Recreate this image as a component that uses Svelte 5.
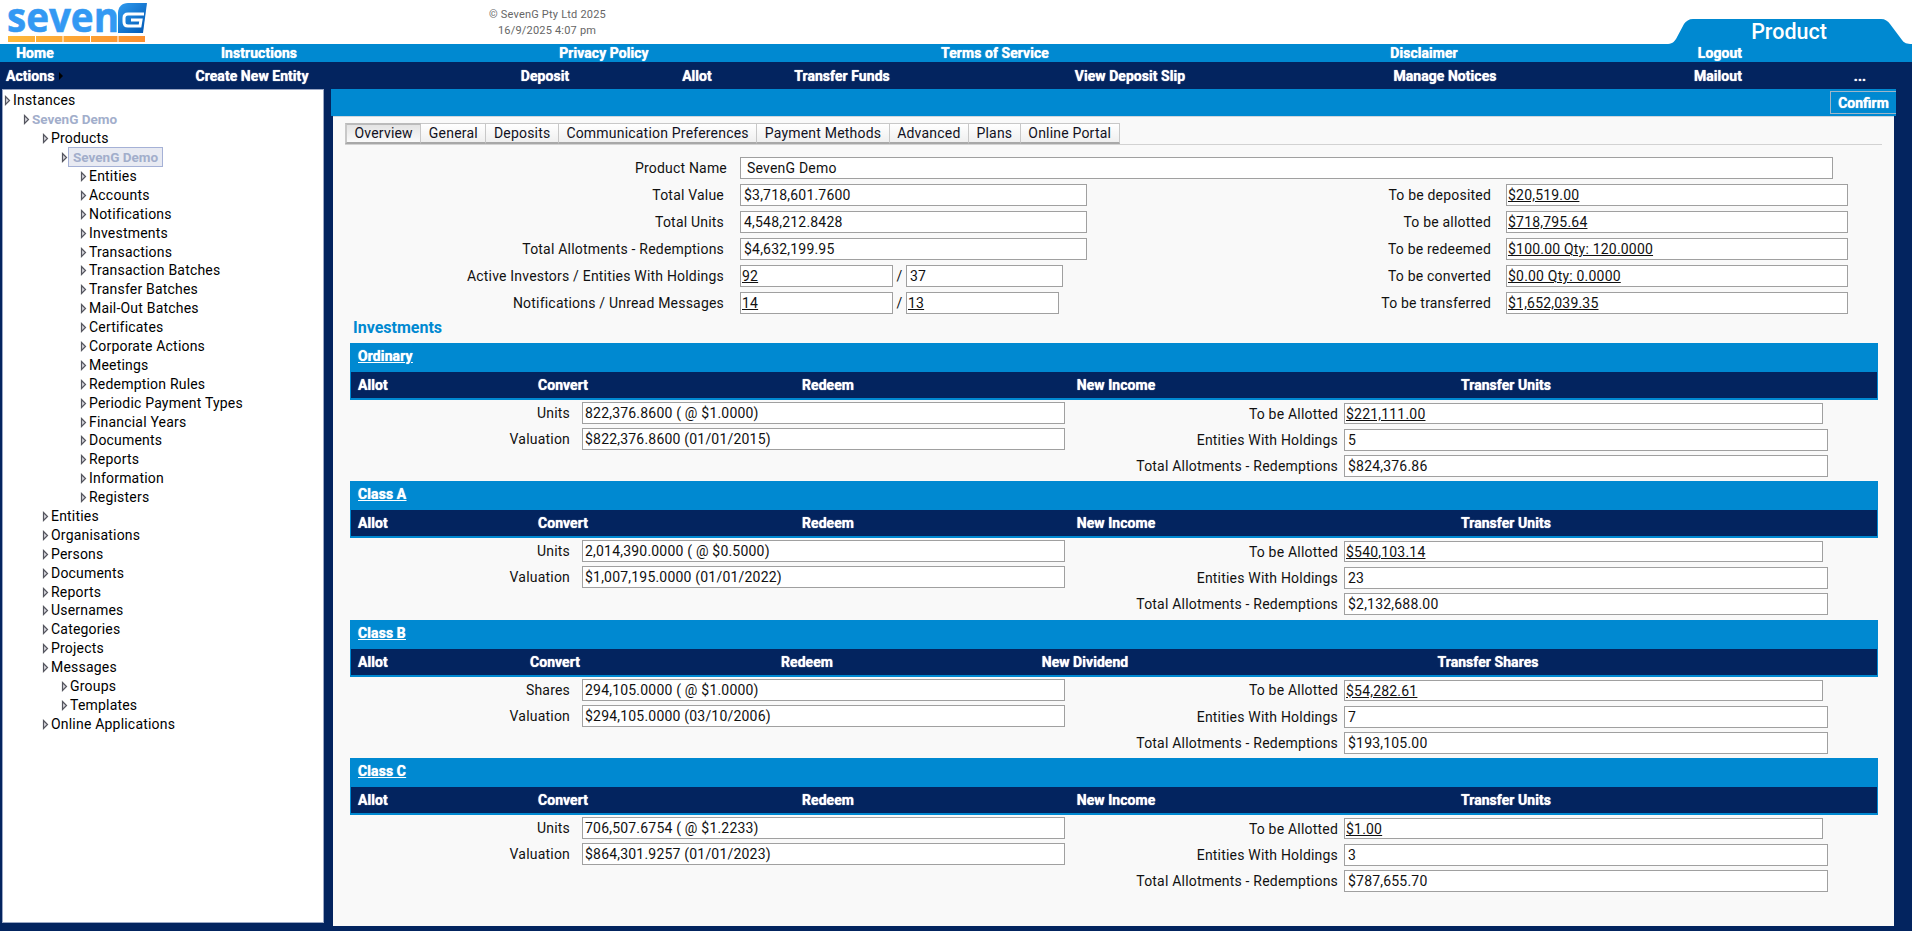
<script lang="ts">
	const topNav = ['Home', 'Instructions', 'Privacy Policy', 'Terms of Service', 'Disclaimer', 'Logout'];
	const actions = ['Create New Entity', 'Deposit', 'Allot', 'Transfer Funds', 'View Deposit Slip', 'Manage Notices', 'Mailout', '...'];
	const tabs = ['Overview', 'General', 'Deposits', 'Communication Preferences', 'Payment Methods', 'Advanced', 'Plans', 'Online Portal'];

	const tree = [
		{ label: 'Instances', depth: 0 },
		{ label: 'SevenG Demo', depth: 1, link: true },
		{ label: 'Products', depth: 2 },
		{ label: 'SevenG Demo', depth: 3, link: true, selected: true },
		...['Entities', 'Accounts', 'Notifications', 'Investments', 'Transactions', 'Transaction Batches', 'Transfer Batches', 'Mail-Out Batches', 'Certificates', 'Corporate Actions', 'Meetings', 'Redemption Rules', 'Periodic Payment Types', 'Financial Years', 'Documents', 'Reports', 'Information', 'Registers'].map((label) => ({ label, depth: 4 })),
		...['Entities', 'Organisations', 'Persons', 'Documents', 'Reports', 'Usernames', 'Categories', 'Projects', 'Messages'].map((label) => ({ label, depth: 2 })),
		{ label: 'Groups', depth: 3 },
		{ label: 'Templates', depth: 3 },
		{ label: 'Online Applications', depth: 2 }
	];

	const todo = [
		['To be deposited', '$20,519.00'],
		['To be allotted', '$718,795.64'],
		['To be redeemed', '$100.00 Qty: 120.0000'],
		['To be converted', '$0.00 Qty: 0.0000'],
		['To be transferred', '$1,652,039.35']
	];

	const sections = [
		{ name: 'Ordinary', shares: false, amount: '822,376.8600 ( @ $1.0000)', valuation: '$822,376.8600 (01/01/2015)', allot: '$221,111.00', holdings: '5', total: '$824,376.86' },
		{ name: 'Class A', shares: false, amount: '2,014,390.0000 ( @ $0.5000)', valuation: '$1,007,195.0000 (01/01/2022)', allot: '$540,103.14', holdings: '23', total: '$2,132,688.00' },
		{ name: 'Class B', shares: true, amount: '294,105.0000 ( @ $1.0000)', valuation: '$294,105.0000 (03/10/2006)', allot: '$54,282.61', holdings: '7', total: '$193,105.00' },
		{ name: 'Class C', shares: false, amount: '706,507.6754 ( @ $1.2233)', valuation: '$864,301.9257 (01/01/2023)', allot: '$1.00', holdings: '3', total: '$787,655.70' }
	];
</script>

<div class="page">
	<header class="header">
		<svg class="logo" viewBox="0 0 147 44" width="147" height="44" role="img" aria-label="SevenG">
			<defs>
				<linearGradient id="g-fill" x1="0" y1="0" x2="1" y2="1">
					<stop offset="0" stop-color="#2f9cf0" />
					<stop offset="1" stop-color="#0056b3" />
				</linearGradient>
				<linearGradient id="bar-fill" x1="0" y1="0" x2="1" y2="0">
					<stop offset="0" stop-color="#fdb93a" />
					<stop offset="1" stop-color="#fd8f2f" />
				</linearGradient>
			</defs>
			<text x="7" y="32" class="logo-text" textLength="112" lengthAdjust="spacingAndGlyphs">seven</text>
			<path d="M118 33V13c0-6 4-10 10-10h19l-4 30z" fill="url(#g-fill)" />
			<path d="M144 14H128q-4 0-4 4v4q0 4 4 4h12l1-6H131" fill="none" stroke="#fff" stroke-width="3" />
			<rect x="8" y="36" width="137" height="6" fill="url(#bar-fill)" />
			<path d="M35.500 36v6M63 36v6M90.500 36v6M118 36v6" stroke="#fff" stroke-width="1" />
		</svg>
		<div class="copyright">
			<div>© SevenG Pty Ltd 2025</div>
			<div>16/9/2025 4:07 pm</div>
		</div>
		<div class="product-tab">
			<svg class="tab-shape" viewBox="0 0 246 25" width="246" height="25" aria-hidden="true">
				<path d="M0 25c6 0 8-2 10-5L18 5c2-3 5-5 9-5H215c4 0 7 2 9 5L236 21c2 3 5 4 10 4z" fill="#0089d1" />
			</svg>
			<span>Product</span>
		</div>
	</header>

	<nav class="nav-top">
		{#each topNav as item}
			<span>{item}</span>
		{/each}
	</nav>
	<nav class="nav-actions">
		<span class="actions-label">Actions<i class="actions-arrow"></i></span>
		{#each actions as item}
			<span>{item}</span>
		{/each}
	</nav>

	<div class="body">
		<aside class="tree">
			{#each tree as node}
				<div class="node" class:d1={node.depth === 1} class:d2={node.depth === 2} class:d3={node.depth === 3} class:d4={node.depth === 4}>
					<svg class="arrow" viewBox="0 0 7 11" width="7" height="11" aria-hidden="true">
						<path d="M1.500 1.500l4 4l-4 4z" fill="#d8d8de" stroke="#55565f" stroke-width="1.200" />
					</svg>
					<span class:link={node.link} class:selected={node.selected}>{node.label}</span>
				</div>
			{/each}
		</aside>

		<main class="main">
			<div class="toolbar"><button class="confirm">Confirm</button></div>
			<div class="content">
				<div class="tabs">
					{#each tabs as tab, i}
						<span class="tab" class:active={i === 0}>{tab}</span>
					{/each}
				</div>

				<div class="summary">
					<div class="row name-row">
						<label for="product-name">Product Name</label>
						<div id="product-name" class="field wide">SevenG Demo</div>
					</div>
					<div class="summary-cols">
						<div class="col-left">
							<div class="row"><span class="lbl">Total Value</span><div class="field">$3,718,601.7600</div></div>
							<div class="row"><span class="lbl">Total Units</span><div class="field">4,548,212.8428</div></div>
							<div class="row"><span class="lbl">Total Allotments - Redemptions</span><div class="field">$4,632,199.95</div></div>
							<div class="row">
								<span class="lbl">Active Investors / Entities With Holdings</span>
								<div class="field half u"><u>92</u></div><span class="slash">/</span><div class="field half-b">37</div>
							</div>
							<div class="row">
								<span class="lbl">Notifications / Unread Messages</span>
								<div class="field half u"><u>14</u></div><span class="slash">/</span><div class="field half-c u"><u>13</u></div>
							</div>
						</div>
						<div class="col-right">
							{#each todo as [label, value]}
								<div class="row"><span class="lbl">{label}</span><div class="field u"><u>{value}</u></div></div>
							{/each}
						</div>
					</div>
				</div>

				<h2 class="heading">Investments</h2>

				{#each sections as s}
					<section class="section">
						<div class="bar"><a href="#top">{s.name}</a></div>
						<div class="ops" class:shares={s.shares}>
							<span class="allot">Allot</span>
							<span>Convert</span>
							<span>Redeem</span>
							<span>{s.shares ? 'New Dividend' : 'New Income'}</span>
							<span>{s.shares ? 'Transfer Shares' : 'Transfer Units'}</span>
						</div>
						<div class="section-body">
							<div class="sec-left">
								<div class="row"><span class="lbl">{s.shares ? 'Shares' : 'Units'}</span><div class="field">{s.amount}</div></div>
								<div class="row"><span class="lbl">Valuation</span><div class="field">{s.valuation}</div></div>
							</div>
							<div class="sec-right">
								<div class="row first"><span class="lbl">To be Allotted</span><div class="field short u"><u>{s.allot}</u></div></div>
								<div class="row"><span class="lbl">Entities With Holdings</span><div class="field">{s.holdings}</div></div>
								<div class="row"><span class="lbl">Total Allotments - Redemptions</span><div class="field">{s.total}</div></div>
							</div>
						</div>
					</section>
				{/each}
			</div>
		</main>
	</div>
</div>

<style>
	:global(body) {
		margin: 0;
		background: #03245f;
	}
	.page {
		width: 1912px;
		height: 931px;
		overflow: hidden;
		display: flex;
		flex-direction: column;
		font-family: Roboto, 'Liberation Sans', sans-serif;
		font-size: 14px;
		letter-spacing: 0.2px;
		color: #111;
		background: #03245f;
	}

	/* header */
	.header {
		height: 44px;
		flex: none;
		display: flex;
		background: #fff;
	}
	.logo {
		flex: none;
		overflow: visible;
	}
	.logo-text {
		font-family: 'Open Sans', sans-serif;
		font-weight: 700;
		font-size: 42px;
		fill: #3399f3;
		stroke: #3399f3;
		stroke-width: 0.6px;
		letter-spacing: 0;
	}
	.copyright {
		margin: 7px 0 0 342px;
		width: 116px;
		color: #666;
		font-size: 11px;
		line-height: 16px;
		text-align: center;
		white-space: nowrap;
	}
	.product-tab {
		margin: 19px 0 0 auto;
		width: 246px;
		height: 25px;
		position: relative;
		color: #fff;
		font-size: 21.500px;
		font-weight: 500;
		line-height: 26px;
		text-align: center;
		letter-spacing: 0;
	}
	.tab-shape {
		position: absolute;
		inset: 0;
	}
	.product-tab span {
		position: relative;
	}

	/* menus */
	.nav-top,
	.nav-actions {
		flex: none;
		display: grid;
		align-items: center;
		color: #fff;
		font-weight: 700;
		text-align: center;
		text-shadow: 0 0 1px #fff;
		white-space: nowrap;
		letter-spacing: 0.05px;
	}
	.nav-top {
		height: 18px;
		background: #0089d1;
		grid-template-columns: 70px 378px 312px 470px 388px 204px;
	}
	.nav-actions {
		height: 27px;
		background: #03245f;
		grid-template-columns: 80px 344px 242px 62px 228px 348px 282px 264px 20px;
	}
	.actions-label {
		text-align: left;
		padding-left: 6px;
		display: flex;
		align-items: center;
	}
	.actions-arrow {
		margin-left: 5px;
		border-left: 4px solid #000;
		border-top: 4px solid transparent;
		border-bottom: 4px solid transparent;
	}

	.body {
		flex: 1;
		min-height: 0;
		display: flex;
		align-items: flex-start;
		padding-left: 2px;
	}

	/* tree */
	.tree {
		width: 322px;
		height: 834px;
		flex: none;
		box-sizing: border-box;
		background: #fff;
		border: 1px solid #9aa7c4;
		padding-top: 1px;
		overflow: hidden;
		font-size: 14px;
		color: #000;
	}
	.node {
		display: flex;
		align-items: center;
		height: 18.900px;
		padding-left: 1px;
		white-space: nowrap;
	}
	.d1 { padding-left: 20px; }
	.d2 { padding-left: 39px; }
	.d3 { padding-left: 58px; }
	.d4 { padding-left: 77px; }
	.arrow {
		flex: none;
		margin-right: 2px;
		margin-top: 1px;
	}
	.link {
		color: #a2aecb;
		font-size: 13.500px;
		font-weight: 700;
		letter-spacing: 0;
	}
	.selected {
		background: #e8eaf2;
		border: 1px solid #a5b1d6;
		padding: 0 4px;
		line-height: 18px;
		margin-left: -2px;
	}

	/* main */
	.main {
		width: 1565px;
		margin-left: 7px;
		flex: none;
	}
	.toolbar {
		height: 27px;
		background: #0089d1;
		display: flex;
		justify-content: flex-end;
		align-items: flex-end;
		padding-bottom: 2px;
		box-sizing: border-box;
	}
	.confirm {
		height: 23px;
		width: 66px;
		padding: 0;
		background: #0089d1;
		border: 1px solid #9fb6c8;
		border-right: none;
		color: #fff;
		font: 700 14px Roboto, sans-serif;
		text-shadow: 0 0 1px #fff;
	}
	.content {
		width: 1561px;
		height: 810px;
		margin-left: 2px;
		box-sizing: border-box;
		background: #f9f9f9;
		padding: 6px 12px 0 12px;
		border-top: 1px solid #cfd6de;
	}

	.tabs {
		display: flex;
		height: 21px;
		border-bottom: 1px solid #d2d2d2;
		width: 1537px;
	}
	.tab {
		height: 21px;
		box-sizing: border-box;
		padding: 0 7.500px;
		line-height: 18px;
		background: linear-gradient(#ffffff, #efefef);
		border: 1px solid #c8c8c8;
		border-bottom: 2px solid #a8a8a8;
		border-left-width: 0;
		color: #112;
		white-space: nowrap;
	}
	.tab.active {
		background: linear-gradient(#e4e4e4, #fafafa);
		border-left-width: 2px;
		border-top: 2px solid #bbb;
		line-height: 17px;
	}

	/* rows */
	.row {
		display: flex;
		align-items: center;
		height: 22px;
		justify-content: flex-end;
		white-space: nowrap;
	}
	.lbl,
	label {
		margin-right: 16px;
	}
	.field {
		box-sizing: border-box;
		height: 22px;
		line-height: 20px;
		background: #fff;
		border: 1px solid #a0a0a0;
		padding-left: 3px;
		color: #111;
		text-align: left;
	}
	.field.u {
		padding-left: 1px;
	}

	.summary {
		margin-top: 12px;
	}
	.name-row {
		justify-content: flex-start;
		margin-bottom: 5px;
	}
	.name-row label {
		width: 382px;
		text-align: right;
		margin-right: 13px;
	}
	.field.wide {
		width: 1093px;
		padding-left: 6px;
	}
	.summary-cols {
		display: flex;
	}
	.summary-cols .row {
		margin-bottom: 5px;
		justify-content: flex-start;
	}
	.col-left {
		width: 742px;
	}
	.col-left .lbl {
		width: 379px;
		text-align: right;
		margin-right: 16px;
	}
	.col-left .field {
		width: 347px;
	}
	.col-left .field.half {
		width: 153px;
	}
	.col-left .field.half-b {
		width: 157px;
	}
	.col-left .field.half-c {
		width: 153px;
	}
	.slash {
		width: 13px;
		text-align: center;
	}
	.col-right {
		width: 767px;
	}
	.col-right .lbl {
		width: 404px;
		text-align: right;
		margin-right: 15px;
	}
	.col-right .field {
		width: 342px;
	}

	.heading {
		margin: -1px 0 0 8px;
		height: 25px;
		color: #0089d1;
		font-size: 16px;
		font-weight: 700;
		line-height: 20px;
		letter-spacing: 0;
	}

	/* class sections */
	.section {
		width: 1528px;
		margin-left: 5px;
		height: 138.400px;
	}
	.bar {
		height: 29px;
		background: #0089d1;
		padding-left: 8px;
		line-height: 27px;
	}
	.bar a {
		color: #fff;
		font-weight: 700;
		text-shadow: 0 0 1px #fff;
		letter-spacing: 0.1px;
	}
	.ops {
		box-sizing: border-box;
		height: 28px;
		background: #03245f;
		border-style: solid;
		border-color: #0089d1;
		border-width: 0 1px 2px 1px;
		display: grid;
		grid-template-columns: 69px 286px 244px 332px 448px;
		align-items: center;
		color: #fff;
		font-weight: 700;
		text-align: center;
		text-shadow: 0 0 1px #fff;
		letter-spacing: 0.05px;
		white-space: nowrap;
	}
	.ops.shares {
		grid-template-columns: 69px 270px 234px 322px 484px;
	}
	.ops .allot {
		text-align: left;
		padding-left: 7px;
	}
	.section-body {
		display: flex;
		padding-top: 2px;
	}
	.section-body .row {
		margin-bottom: 4px;
	}
	.sec-left {
		width: 715px;
		flex: none;
	}
	.sec-left .lbl {
		margin-right: 12px;
	}
	.sec-left .field {
		width: 483px;
		padding-left: 2px;
	}
	.sec-right {
		padding-top: 1px;
	}
	.sec-right .row {
		justify-content: flex-start;
	}
	.sec-right .row.first {
		height: 21px;
		margin-bottom: 5px;
	}
	.sec-right .lbl {
		width: 273px;
		text-align: right;
		margin-right: 6px;
		flex: none;
	}
	.sec-right .field {
		width: 483.500px;
	}
	.sec-right .field.short {
		width: 479px;
		height: 21px;
	}
</style>
